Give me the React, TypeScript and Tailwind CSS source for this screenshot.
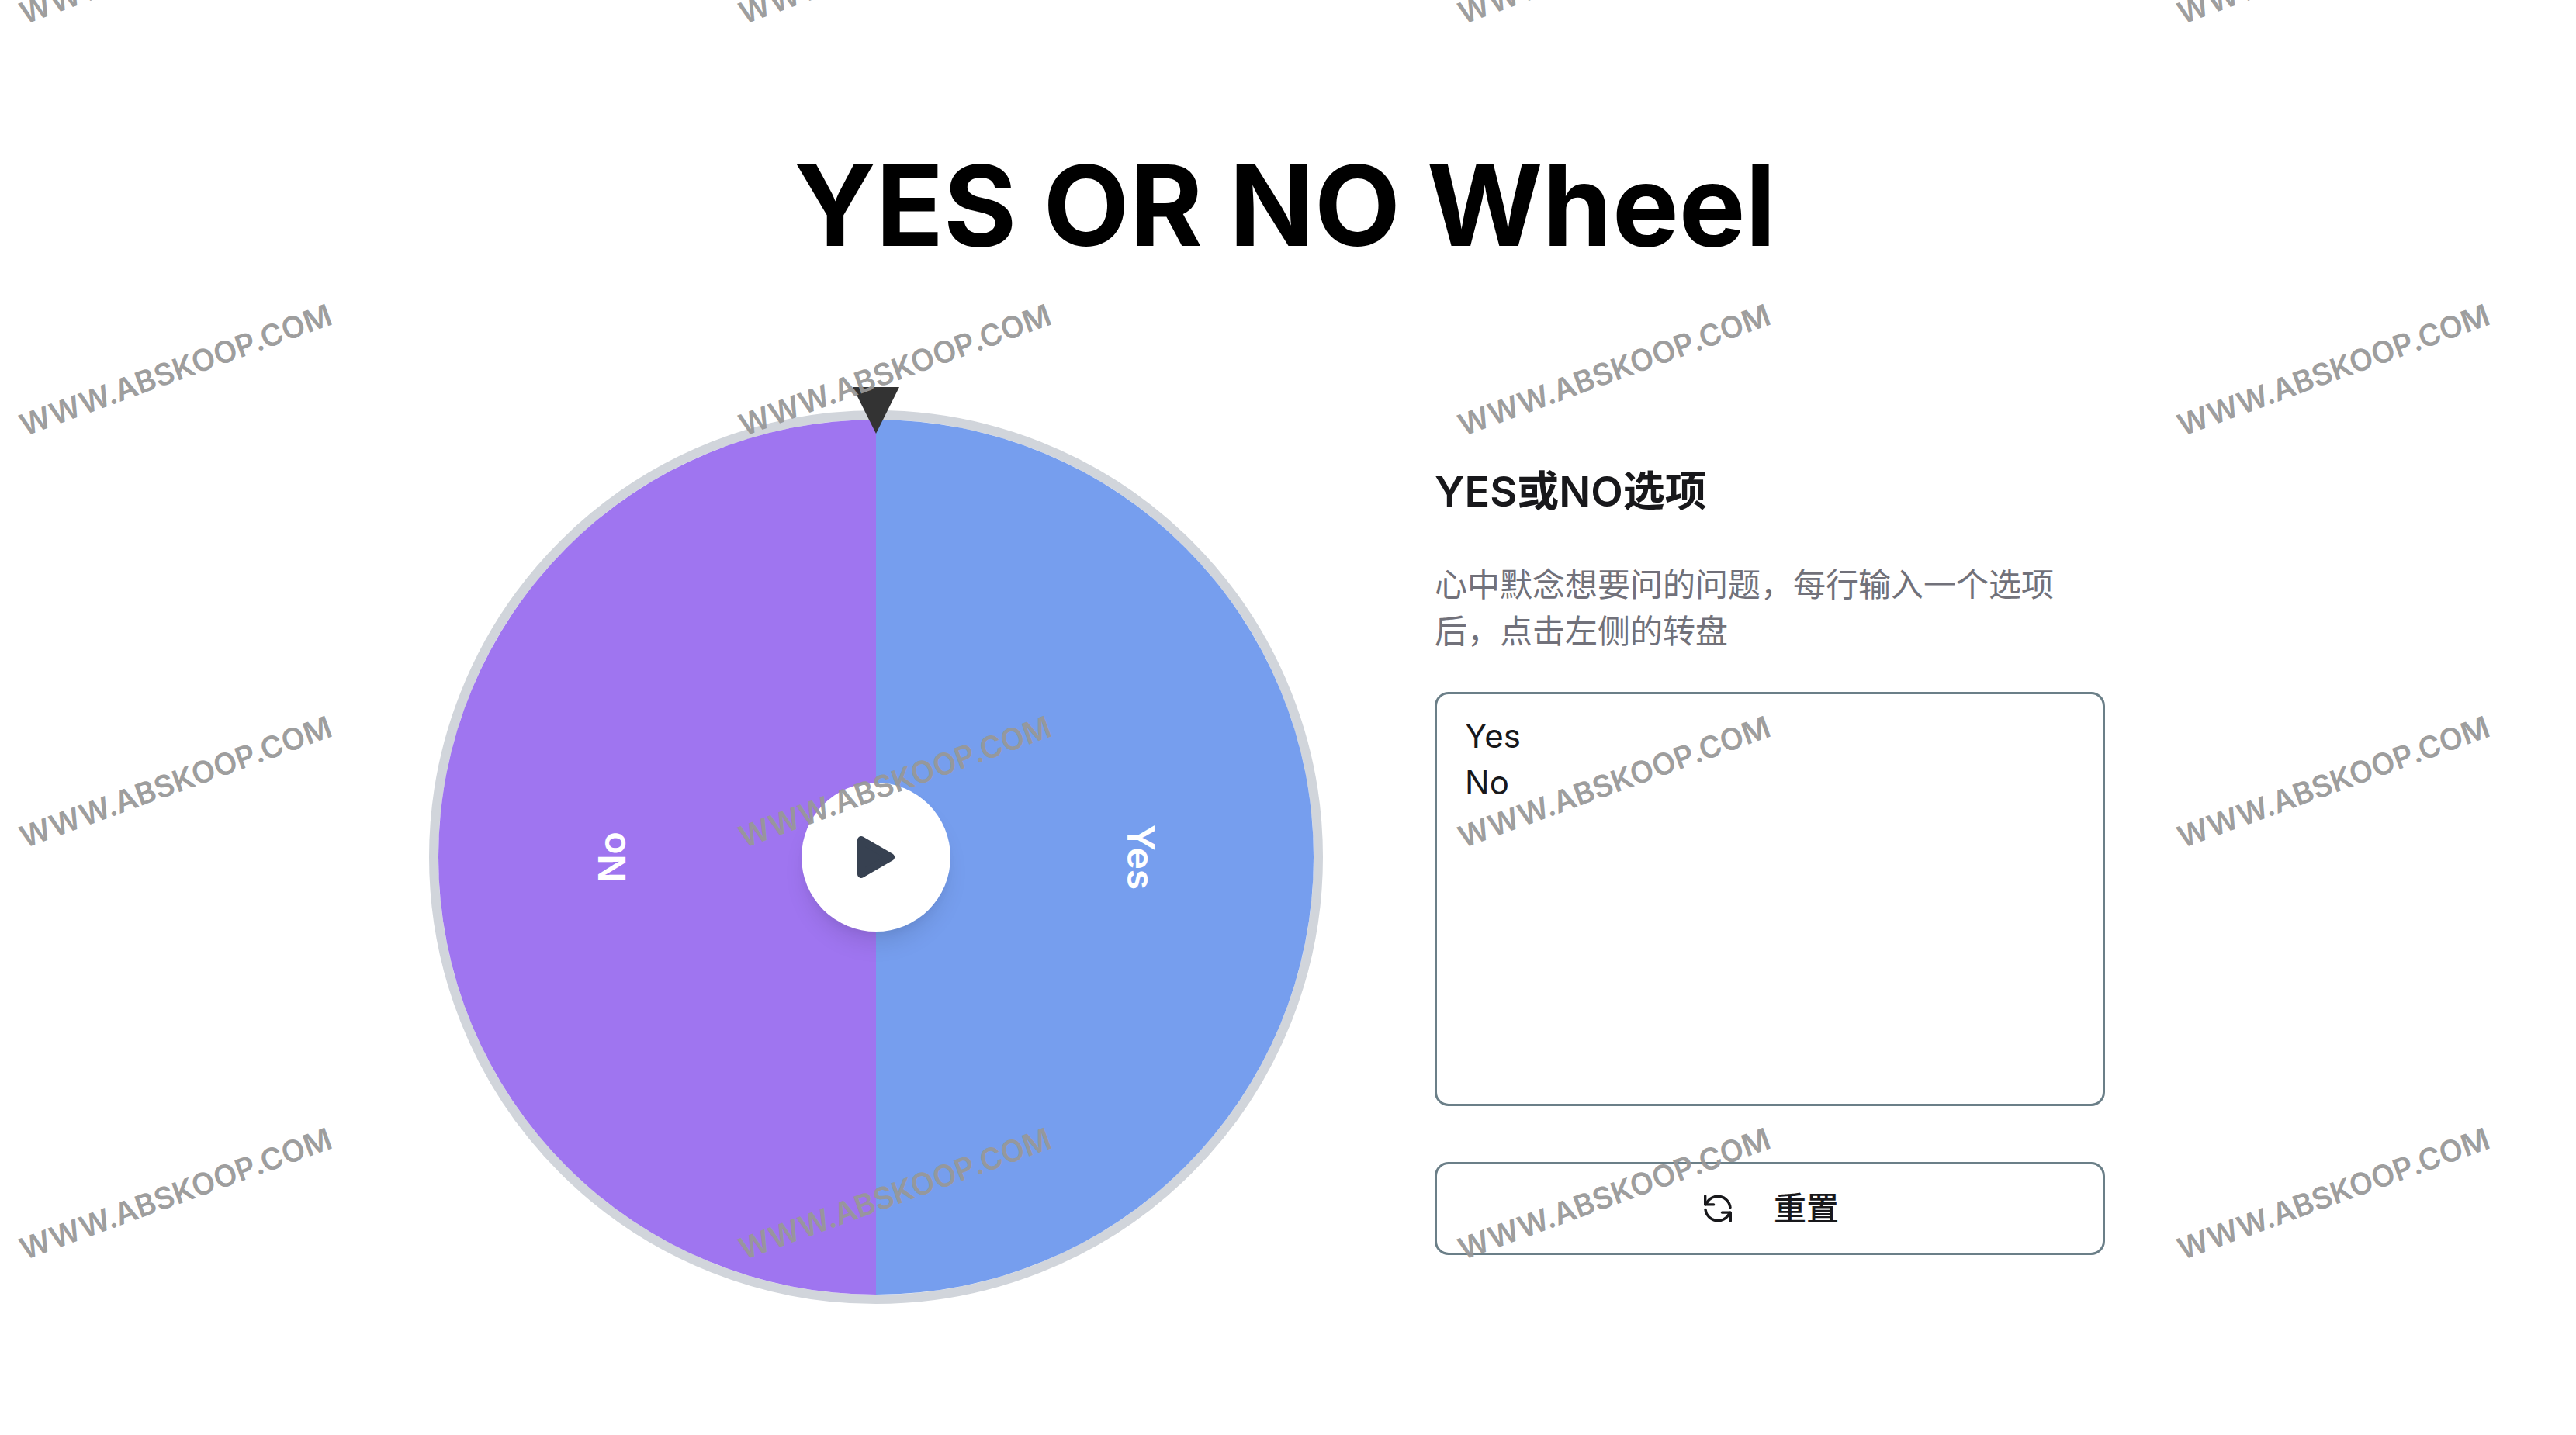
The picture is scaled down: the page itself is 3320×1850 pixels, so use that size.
import React, { useState } from 'react';

const defaultOptions = 'Yes\nNo';

const watermarks = Array.from({ length: 16 }, (_, i) => i);

function ResetIcon() {
  return (
    <svg
      className="w-9 h-9"
      viewBox="0 0 36 36"
      fill="none"
      stroke="currentColor"
      strokeWidth="3.4"
      strokeLinecap="round"
      strokeLinejoin="round"
      aria-hidden="true"
    >
      <path d="M34 16.6A16.2 16.2 0 0 0 3.4 11.2L2 12.8" />
      <path d="M1.7 1.7V12.9H12.6" />
      <path d="M2 19.4A16.2 16.2 0 0 0 32.6 24.8L34 23.2" />
      <path d="M34.3 34.3V23.1H23.4" />
    </svg>
  );
}

function Wheel() {
  return (
    <div className="relative w-[1152px] h-[1152px] shrink-0">
      <div className="w-full h-full rounded-full border-12 border-[#d1d5db] overflow-hidden grid grid-cols-2 text-5xl font-semibold text-white">
        <div className="bg-[#9f75f0] flex items-center justify-end pr-[307px]">
          <span className="-rotate-90">No</span>
        </div>
        <div className="bg-[#769eee] flex items-center pl-[299px]">
          <span className="rotate-90">Yes</span>
        </div>
      </div>

      {/* Pointer */}
      <svg className="absolute -top-[30px] left-1/2 -translate-x-1/2 w-[60px] h-[60px]" viewBox="0 0 60 60" aria-hidden="true">
        <path d="M0 0H60L30 60Z" fill="#333333" />
      </svg>

      {/* Spin button */}
      <button
        type="button"
        aria-label="Spin"
        className="absolute top-1/2 left-1/2 -translate-x-1/2 -translate-y-1/2 w-48 h-48 rounded-full bg-white shadow-[0_20px_30px_-6px_rgba(0,0,0,0.1),0_8px_12px_-4px_rgba(0,0,0,0.05)] flex items-center justify-center"
      >
        <svg className="w-12 h-14" viewBox="0 0 48 56" aria-hidden="true">
          <path d="M5 6L43 28L5 50Z" fill="#374151" stroke="#374151" strokeWidth="10" strokeLinejoin="round" />
        </svg>
      </button>
    </div>
  );
}

export default function App() {
  const [options, setOptions] = useState(defaultOptions);

  return (
    <div className="relative min-h-screen bg-white overflow-hidden font-[Inter,'Noto_Sans_CJK_SC',sans-serif]">
      <main className="pt-[193px] pb-[168px] pr-2">
        <h1 className="text-[144px] leading-[144px] font-bold text-black text-center">YES OR NO Wheel</h1>

        <div className="mt-48 mx-auto max-w-[2206px] flex items-center gap-36">
          <Wheel />

          <div className="w-[864px] pt-3">
            <h2 className="text-[54px] leading-[60px] font-semibold text-[#18181b]">YES或NO选项</h2>
            <label htmlFor="options" className="block mt-[60px] text-[42px] leading-[60px] text-[#71717a]">
              心中默念想要问的问题，每行输入一个选项后，点击左侧的转盘
            </label>
            <textarea
              id="options"
              value={options}
              onChange={(e) => setOptions(e.target.value)}
              className="block mt-12 w-full h-[534px] resize-none rounded-[18px] border-3 border-[#6b7f88] bg-white px-9 py-6 text-[42px] leading-[60px] text-[#18181b] outline-none"
            />
            <button
              type="button"
              onClick={() => setOptions(defaultOptions)}
              className="mt-[72px] w-full h-[120px] rounded-[18px] border-3 border-[#6b7f88] bg-white flex items-center justify-center gap-[54px] pl-1 text-[42px] leading-[60px] font-medium text-[#18181b]"
            >
              <ResetIcon />
              重置
            </button>
          </div>
        </div>
      </main>

      {/* Watermark */}
      <div className="absolute inset-0 overflow-hidden pointer-events-none" aria-hidden="true">
        <div className="-mt-[320px] -ml-[237px] grid grid-cols-[repeat(4,927px)] auto-rows-[531px] place-items-center">
          {watermarks.map((i) => (
            <span key={i} className="-rotate-20 text-[39px] leading-none font-semibold text-[#989898]/95 whitespace-nowrap">
              WWW.ABSKOOP.COM
            </span>
          ))}
        </div>
      </div>
    </div>
  );
}
